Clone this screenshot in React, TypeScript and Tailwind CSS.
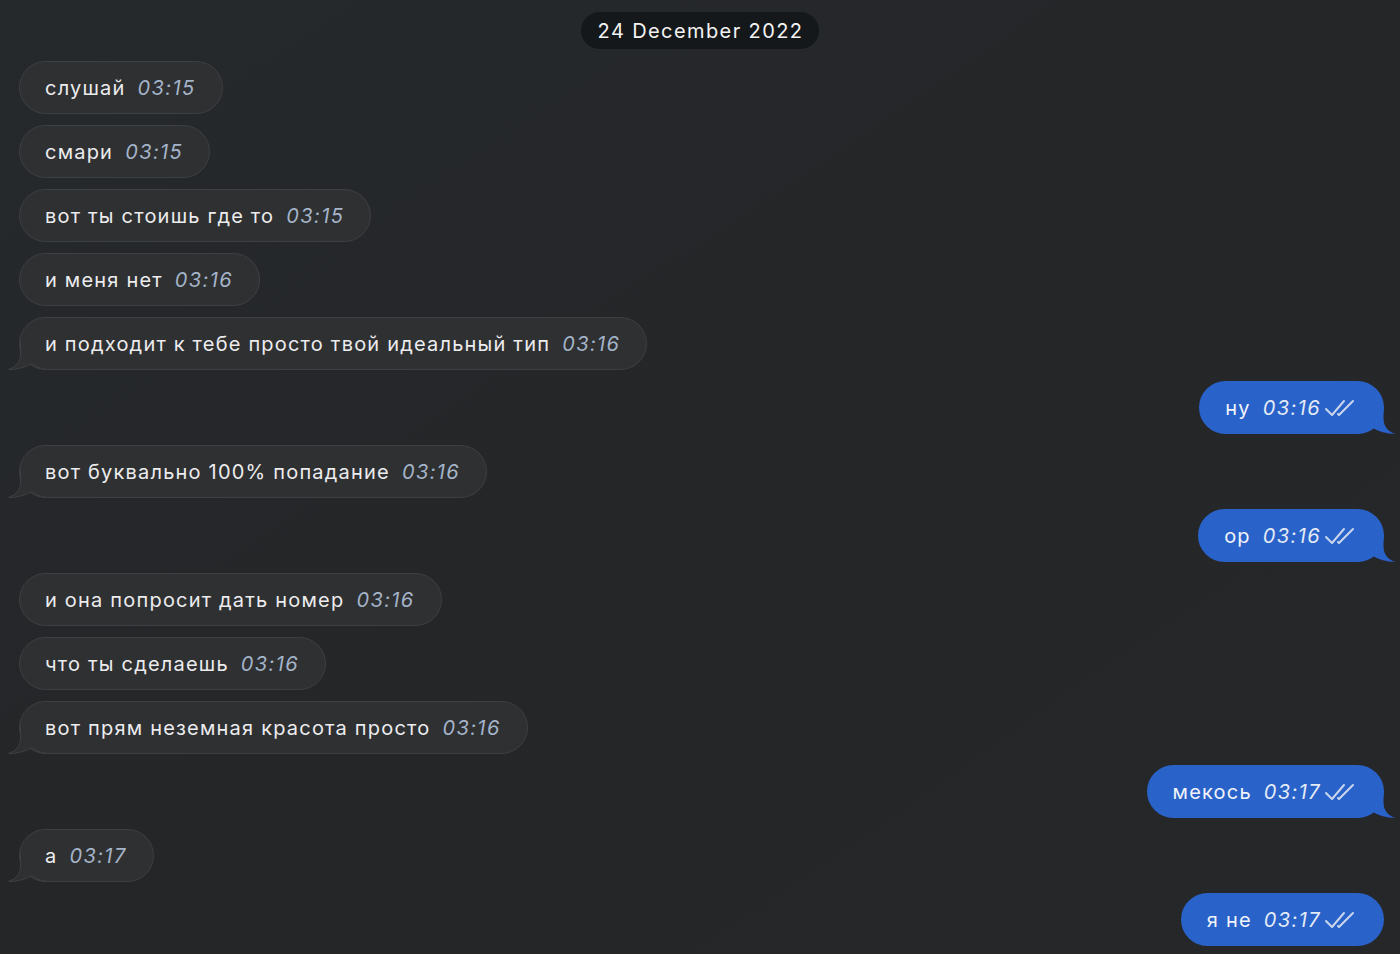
const font = { fontFamily: "Inter, 'Noto Sans', sans-serif" };

type Message = {
  text: string;
  time: string;
  out?: boolean;
  tail?: boolean;
};

const messages: Message[] = [
  { text: "слушай", time: "03:15" },
  { text: "смари", time: "03:15" },
  { text: "вот ты стоишь где то", time: "03:15" },
  { text: "и меня нет", time: "03:16" },
  { text: "и подходит к тебе просто твой идеальный тип", time: "03:16", tail: true },
  { text: "ну", time: "03:16", out: true, tail: true },
  { text: "вот буквально 100% попадание", time: "03:16", tail: true },
  { text: "ор", time: "03:16", out: true, tail: true },
  { text: "и она попросит дать номер", time: "03:16" },
  { text: "что ты сделаешь", time: "03:16" },
  { text: "вот прям неземная красота просто", time: "03:16", tail: true },
  { text: "мекось", time: "03:17", out: true, tail: true },
  { text: "а", time: "03:17", tail: true },
  { text: "я не", time: "03:17", out: true },
];

const DoubleCheck = () => (
  <svg width="32" height="20" viewBox="0 0 32 20" fill="none" className="ml-[3px] shrink-0">
    <path d="M2 11 L8 17 L20 3" stroke="#c9d6ec" strokeWidth="2" strokeLinecap="round" strokeLinejoin="round" />
    <path d="M14 16 L15 17 L29 3" stroke="#c9d6ec" strokeWidth="2" strokeLinecap="round" strokeLinejoin="round" />
  </svg>
);

const InTail = () => (
  <svg
    width="44"
    height="28"
    viewBox="0 0 44 28"
    className="absolute left-[-12px] bottom-[-1px] pointer-events-none"
  >
    <path
      d="M12.5 0 L12.5 12 Q12.5 24 0.5 27.5 Q14 27.5 24 21.5 Q31 27.5 44 27.5 L44 0 Z"
      fill="#2f3032"
    />
    <path
      d="M12.5 0 L12.5 12 Q12.5 24 0.5 27.5 Q14 27.5 24 21.5 Q31 27.5 44 27.5"
      fill="none"
      stroke="#3d3f42"
      strokeWidth="1"
    />
  </svg>
);

const OutTail = () => (
  <svg
    width="44"
    height="28"
    viewBox="0 0 44 28"
    className="absolute right-[-12px] bottom-0 pointer-events-none"
  >
    <path
      d="M31.5 0 L31.5 12 Q31.5 24 43.5 28 Q30 28 20 21.5 Q13 28 0 28 L0 0 Z"
      fill="#2962c8"
    />
  </svg>
);

const Bubble = ({ msg }: { msg: Message }) => {
  if (msg.out) {
    return (
      <div className="flex justify-end pr-[16px]">
        <div className="relative h-[53px] rounded-full bg-[#2962c8] pl-[26px] pr-[28px] flex items-center">
          {msg.tail && <OutTail />}
          <span className="relative text-[20px] tracking-[1.2px] text-[#f1f4fa]">{msg.text}</span>
          <span className="relative ml-[12px] text-[20px] italic tracking-[1.4px] text-[#e4ebf7]">{msg.time}</span>
          <span className="relative flex items-center">
            <DoubleCheck />
          </span>
        </div>
      </div>
    );
  }

  return (
    <div className="flex justify-start pl-[19px]">
      <div className="relative h-[53px] rounded-full bg-[#2f3032] border border-[#3d3f42] pl-[25px] pr-[26px] flex items-center">
        {msg.tail && <InTail />}
        <span className="relative text-[20px] tracking-[1.2px] text-[#ececee]">{msg.text}</span>
        <span className="relative ml-[12px] text-[20px] italic tracking-[1.4px] text-[#a4b4c9]">{msg.time}</span>
      </div>
    </div>
  );
};

export default function App() {
  return (
    <div
      className="w-[1400px] h-[954px] overflow-hidden bg-[#25282a] bg-gradient-to-br from-[#26292c] via-[#242628] to-[#262729]"
      style={font}
    >
      <div className="flex flex-col">
        <div className="flex justify-center pt-[12px]">
          <div className="h-[37px] pl-[17px] pr-[16px] rounded-full bg-[#15181a] flex items-center text-[20px] tracking-[1.4px] text-[#f4f4f4]">
            24 December 2022
          </div>
        </div>
        <div className="mt-[12px] flex flex-col gap-[11px]">
          {messages.map((m, i) => (
            <Bubble key={i} msg={m} />
          ))}
        </div>
      </div>
    </div>
  );
}
